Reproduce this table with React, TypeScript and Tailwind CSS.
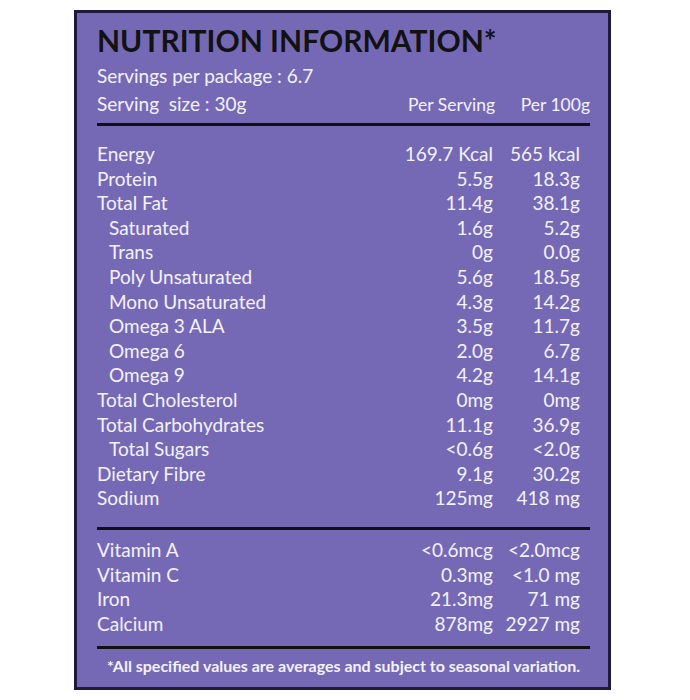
import React from 'react';

type Row = { label: string; serving: string; per100: string; indent?: boolean };

const nutrients: Row[] = [
  { label: 'Energy', serving: '169.7 Kcal', per100: '565 kcal' },
  { label: 'Protein', serving: '5.5g', per100: '18.3g' },
  { label: 'Total Fat', serving: '11.4g', per100: '38.1g' },
  { label: 'Saturated', serving: '1.6g', per100: '5.2g', indent: true },
  { label: 'Trans', serving: '0g', per100: '0.0g', indent: true },
  { label: 'Poly Unsaturated', serving: '5.6g', per100: '18.5g', indent: true },
  { label: 'Mono Unsaturated', serving: '4.3g', per100: '14.2g', indent: true },
  { label: 'Omega 3 ALA', serving: '3.5g', per100: '11.7g', indent: true },
  { label: 'Omega 6', serving: '2.0g', per100: '6.7g', indent: true },
  { label: 'Omega 9', serving: '4.2g', per100: '14.1g', indent: true },
  { label: 'Total Cholesterol', serving: '0mg', per100: '0mg' },
  { label: 'Total Carbohydrates', serving: '11.1g', per100: '36.9g' },
  { label: 'Total Sugars', serving: '<0.6g', per100: '<2.0g', indent: true },
  { label: 'Dietary Fibre', serving: '9.1g', per100: '30.2g' },
  { label: 'Sodium', serving: '125mg', per100: '418 mg' },
];

const vitamins: Row[] = [
  { label: 'Vitamin A', serving: '<0.6mcg', per100: '<2.0mcg' },
  { label: 'Vitamin C', serving: '0.3mg', per100: '<1.0 mg' },
  { label: 'Iron', serving: '21.3mg', per100: '71 mg' },
  { label: 'Calcium', serving: '878mg', per100: '2927 mg' },
];

const NutrientRow = ({ row }: { row: Row }) => (
  <div className="flex h-[24.6px] items-center">
    <span className={row.indent ? 'flex-1 pl-3' : 'flex-1'}>{row.label}</span>
    <span className="w-[110px] text-right">{row.serving}</span>
    <span className="w-[87px] pr-[10px] text-right box-content">{row.per100}</span>
  </div>
);

const App = () => {
  return (
    <div className="w-[690px] h-[700px] bg-white" style={{ fontFamily: 'Lato, "Open Sans", sans-serif' }}>
      <div className="ml-[74px] pt-[10px]">
        <div className="w-[537px] h-[680px] border-[3px] border-[#1d1a3d] bg-[#7569b6] pl-[20px] pr-[18px] text-[#f4f2fb]">
          {/* Header */}
          <h1 className="mt-[7px] text-[30px] leading-[40px] font-bold text-[#121212]">
            NUTRITION INFORMATION*
          </h1>
          <p className="mt-[3px] text-[19px] leading-[26px]">Servings per package : 6.7</p>
          <div className="flex items-end h-[28px]">
            <p className="flex-1 text-[19px] leading-[26px]">Serving&nbsp; size : 30g</p>
            <span className="text-[17.5px] leading-[24px]">Per Serving</span>
            <span className="w-[95px] text-right text-[17.5px] leading-[24px]">Per 100g</span>
          </div>
          <div className="mt-[6px] h-[3px] bg-[#111]" />

          {/* Nutrients */}
          <div className="mt-[16px] text-[19px]">
            {nutrients.map((row) => (
              <NutrientRow key={row.label} row={row} />
            ))}
          </div>
          <div className="mt-[16px] h-[3px] bg-[#111]" />

          {/* Vitamins & minerals */}
          <div className="mt-[8px] text-[19px]">
            {vitamins.map((row) => (
              <NutrientRow key={row.label} row={row} />
            ))}
          </div>
          <div className="mt-[10px] h-[3px] bg-[#111]" />

          <p className="mt-[7px] text-center text-[16px] font-bold leading-[20px]">
            *All specified values are averages and subject to seasonal variation.
          </p>
        </div>
      </div>
    </div>
  );
};

export default App;
